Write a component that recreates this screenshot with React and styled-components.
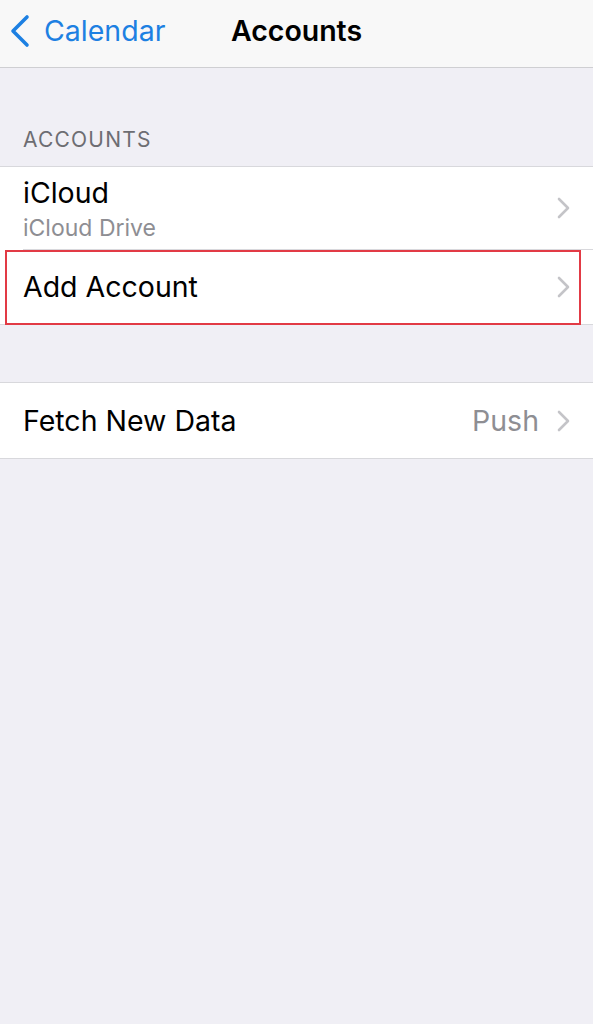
import React from 'react';
import styled, { createGlobalStyle } from 'styled-components';

const GlobalStyle = createGlobalStyle`
  html, body {
    margin: 0;
    padding: 0;
    background: #f0eff5;
    font-family: Inter, "Liberation Sans", sans-serif;
    -webkit-font-smoothing: antialiased;
  }
`;

const Page = styled.div`
  min-height: 1024px;
  background: #f0eff5;
`;

const NavBar = styled.div`
  height: 68px;
  box-sizing: border-box;
  padding-bottom: 6px;
  background: #f8f8f8;
  border-bottom: 1px solid #cfcfd2;
  display: grid;
  grid-template-columns: 1fr auto 1fr;
  align-items: center;
`;

const BackButton = styled.div`
  display: flex;
  align-items: center;
  gap: 14px;
  padding-left: 10px;
  color: #1d80e2;
  font-size: 28.5px;
`;

const Title = styled.div`
  font-size: 28.5px;
  font-weight: 600;
  color: #000;
`;

const SectionHeader = styled.div`
  padding: 59px 23px 14px;
  font-size: 21px;
  color: #6d6d72;
  letter-spacing: 1.2px;
`;

const Group = styled.div`
  background: #fff;
  border-top: 1px solid #d8d8dc;
  border-bottom: 1px solid #d8d8dc;
  margin-top: ${(p) => p.gap || 0}px;
`;

const Row = styled.div`
  position: relative;
  height: ${(p) => p.h || 76}px;
  display: flex;
  align-items: center;
  padding: 0 23px;
  ${(p) =>
    p.divider &&
    `&::after {
      content: '';
      position: absolute;
      left: 23px;
      right: 0;
      bottom: -1px;
      height: 1px;
      background: #d8d8dc;
    }`}
`;

const Highlight = styled.div`
  position: absolute;
  left: 5px;
  right: 12px;
  top: 1px;
  bottom: -1px;
  border: 2px solid #e23a45;
  pointer-events: none;
`;

const Labels = styled.div`
  flex: 1;
  display: flex;
  flex-direction: column;
  gap: 4px;
`;

const Label = styled.div`
  font-size: 28.5px;
  color: #000;
`;

const SubLabel = styled.div`
  font-size: 23px;
  color: #8e8e93;
`;

const Value = styled.div`
  font-size: 28.5px;
  color: #8e8e93;
  margin-right: 18px;
`;

const Chevron = () => (
  <svg width="13" height="22" viewBox="0 0 13 22">
    <path d="M2 2 L11 11 L2 20" fill="none" stroke="#c4c4c8" strokeWidth="2.6" strokeLinecap="round" strokeLinejoin="round" />
  </svg>
);

const BackChevron = () => (
  <svg width="20" height="34" viewBox="0 0 20 34">
    <path d="M17 3 L3 17 L17 31" fill="none" stroke="#1d80e2" strokeWidth="3.6" strokeLinecap="round" strokeLinejoin="round" />
  </svg>
);

function App() {
  return (
    <Page>
      <GlobalStyle />
      <NavBar>
        <BackButton>
          <BackChevron />
          Calendar
        </BackButton>
        <Title>Accounts</Title>
        <div />
      </NavBar>

      <SectionHeader>ACCOUNTS</SectionHeader>
      <Group>
        <Row h={82} divider>
          <Labels>
            <Label>iCloud</Label>
            <SubLabel>iCloud Drive</SubLabel>
          </Labels>
          <Chevron />
        </Row>
        <Row h={75}>
          <Highlight />
          <Labels>
            <Label>Add Account</Label>
          </Labels>
          <Chevron />
        </Row>
      </Group>

      <Group gap={57}>
        <Row h={75}>
          <Labels>
            <Label>Fetch New Data</Label>
          </Labels>
          <Value>Push</Value>
          <Chevron />
        </Row>
      </Group>
    </Page>
  );
}

export default App;
